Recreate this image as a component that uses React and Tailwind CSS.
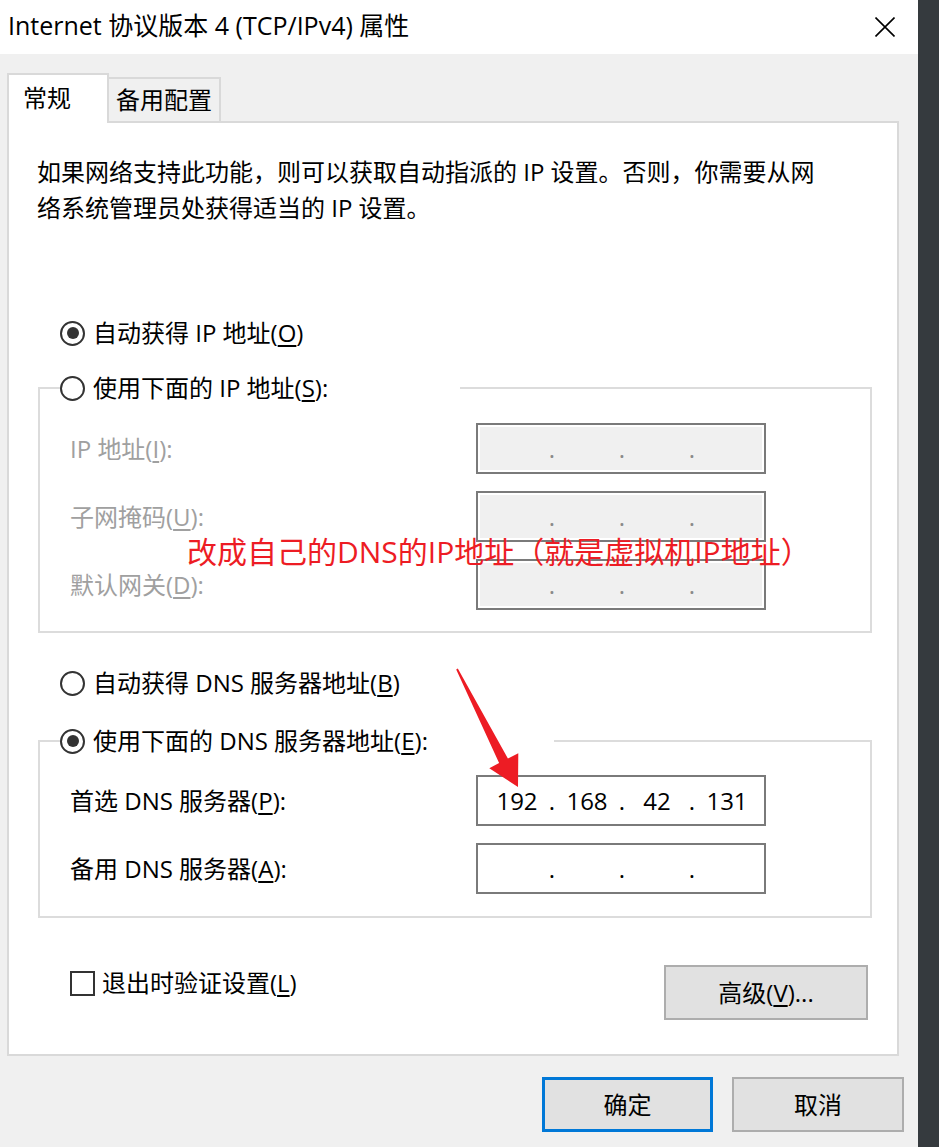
import React from 'react';

const Radio = ({ checked }) => (
  <span className="w-[25px] h-[25px] rounded-full border-2 border-[#333] bg-white flex items-center justify-center shrink-0">
    {checked && <span className="w-[12px] h-[12px] rounded-full bg-[#333]" />}
  </span>
);

const Key = ({ children }) => <u className="underline underline-offset-[3px] decoration-[1.5px]">{children}</u>;

const IpBox = ({ disabled, parts = ['', '', '', ''] }) => (
  <div className="w-[290px] h-[51px] border-2 border-[#7a7a7a] p-[2px] bg-white shrink-0">
    <div
      className={`h-full flex items-center pl-[6px] ${
        disabled ? 'bg-[#f0f0f0] text-[#8a8a8a]' : 'bg-white text-black'
      }`}
    >
      <span className="w-[62px] text-center">{parts[0]}</span>
      <span className="w-[8px] text-center">.</span>
      <span className="w-[62px] text-center">{parts[1]}</span>
      <span className="w-[8px] text-center">.</span>
      <span className="w-[62px] text-center">{parts[2]}</span>
      <span className="w-[8px] text-center">.</span>
      <span className="w-[62px] text-center">{parts[3]}</span>
    </div>
  </div>
);

const FieldRow = ({ label, disabled, parts }) => (
  <div className="flex items-center">
    <span className={`w-[436px] pl-[30px] whitespace-nowrap ${disabled ? 'text-[#a0a0a0]' : 'text-black'}`}>
      {label}
    </span>
    <IpBox disabled={disabled} parts={parts} />
  </div>
);

const Button = ({ children, primary, className = '' }) => (
  <button
    className={`h-[55px] bg-[#e1e1e1] flex items-center justify-center ${
      primary ? 'border-[3px] border-[#0078d7]' : 'border-2 border-[#adadad]'
    } ${className}`}
  >
    {children}
  </button>
);

export default function App() {
  return (
    <div className="relative w-[939px] h-[1147px] flex overflow-hidden text-black text-[24px] leading-[36px] font-['Open_Sans','Noto_Sans_CJK_SC',sans-serif]">
      <div className="w-[918px] flex flex-col bg-[#f0f0f0]">
        {/* title bar */}
        <div className="h-[54px] bg-white flex items-center justify-between pl-[8px] pr-[23px] pb-[4px]">
          <span className="whitespace-nowrap text-[25px]">Internet 协议版本 4 (TCP/IPv4) 属性</span>
          <svg width="20" height="20" viewBox="0 0 20 20" className="mt-[4px]">
            <path d="M0.5 0.5 L19.5 19.5 M19.5 0.5 L0.5 19.5" stroke="#000" strokeWidth="1.6" fill="none" />
          </svg>
        </div>

        {/* tabs */}
        <div className="flex items-end pt-[19px] pl-[7px]">
          <div className="relative z-10 w-[102px] h-[50px] -mb-[2px] bg-white border-2 border-b-0 border-[#d9d9d9] pl-[14px] pb-[3px] flex items-center">
            常规
          </div>
          <div className="w-[112px] h-[44px] border-2 border-b-0 border-l-0 border-[#d9d9d9] flex items-center justify-center">
            备用配置
          </div>
        </div>

        {/* panel */}
        <div className="ml-[7px] w-[892px] h-[935px] bg-white border-2 border-[#d9d9d9] flex flex-col">
          <p className="mt-[31px] pl-[28px] whitespace-nowrap">
            如果网络支持此功能，则可以获取自动指派的 IP 设置。否则，你需要从网
            <br />
            络系统管理员处获得适当的 IP 设置。
          </p>

          <div className="mt-[89px] ml-[51px] h-[36px] flex items-center gap-[8px]">
            <Radio checked />
            <span>
              自动获得 IP 地址(<Key>O</Key>)
            </span>
          </div>

          <fieldset className="mt-[19px] ml-[29px] w-[834px] border-2 border-[#dcdcdc]">
            <legend className="ml-[20px] w-[400px]">
              <div className="h-[36px] flex items-center gap-[8px]">
                <Radio />
                <span>
                  使用下面的 IP 地址(<Key>S</Key>):
                </span>
              </div>
            </legend>
            <div className="pt-[17px] pb-[21px] flex flex-col gap-[17px]">
              <FieldRow disabled label={<>IP 地址(<Key>I</Key>):</>} />
              <FieldRow disabled label={<>子网掩码(<Key>U</Key>):</>} />
              <FieldRow disabled label={<>默认网关(<Key>D</Key>):</>} />
            </div>
          </fieldset>

          <div className="mt-[32px] ml-[51px] h-[36px] flex items-center gap-[8px]">
            <Radio />
            <span>
              自动获得 DNS 服务器地址(<Key>B</Key>)
            </span>
          </div>

          <fieldset className="mt-[22px] ml-[29px] w-[834px] border-2 border-[#dcdcdc]">
            <legend className="ml-[20px] w-[494px]">
              <div className="h-[36px] flex items-center gap-[8px]">
                <Radio checked />
                <span>
                  使用下面的 DNS 服务器地址(<Key>E</Key>):
                </span>
              </div>
            </legend>
            <div className="pt-[16px] pb-[22px] flex flex-col gap-[17px]">
              <FieldRow label={<>首选 DNS 服务器(<Key>P</Key>):</>} parts={['192', '168', '42', '131']} />
              <FieldRow label={<>备用 DNS 服务器(<Key>A</Key>):</>} />
            </div>
          </fieldset>

          <div className="mt-[47px] pl-[61px] pr-[29px] flex items-start justify-between">
            <div className="h-[36px] flex items-center gap-[7px]">
              <span className="w-[25px] h-[25px] border-2 border-[#333] bg-white" />
              <span>
                退出时验证设置(<Key>L</Key>)
              </span>
            </div>
            <Button className="w-[204px]">
              高级(<Key>V</Key>)...
            </Button>
          </div>
        </div>

        {/* dialog buttons */}
        <div className="mt-[21px] flex justify-end gap-[19px] pr-[14px]">
          <Button primary className="w-[171px]">
            确定
          </Button>
          <Button className="w-[172px]">取消</Button>
        </div>
      </div>
      <div className="flex-1 bg-[#353a3e]" />

      {/* annotation overlay */}
      <div className="absolute left-[187px] top-[532px] text-[30px] leading-[40px] text-[#ed1c24] whitespace-nowrap">
        改成自己的DNS的IP地址（就是虚拟机IP地址）
      </div>
      <svg className="absolute left-[440px] top-[660px]" width="100" height="140" viewBox="440 660 100 140">
        <polygon
          points="456.2,669.4 457.8,668.6 507.9,758.5 518.3,753.3 518,787 489.3,768.3 499.1,763.1"
          fill="#ed1c24"
        />
      </svg>
    </div>
  );
}
